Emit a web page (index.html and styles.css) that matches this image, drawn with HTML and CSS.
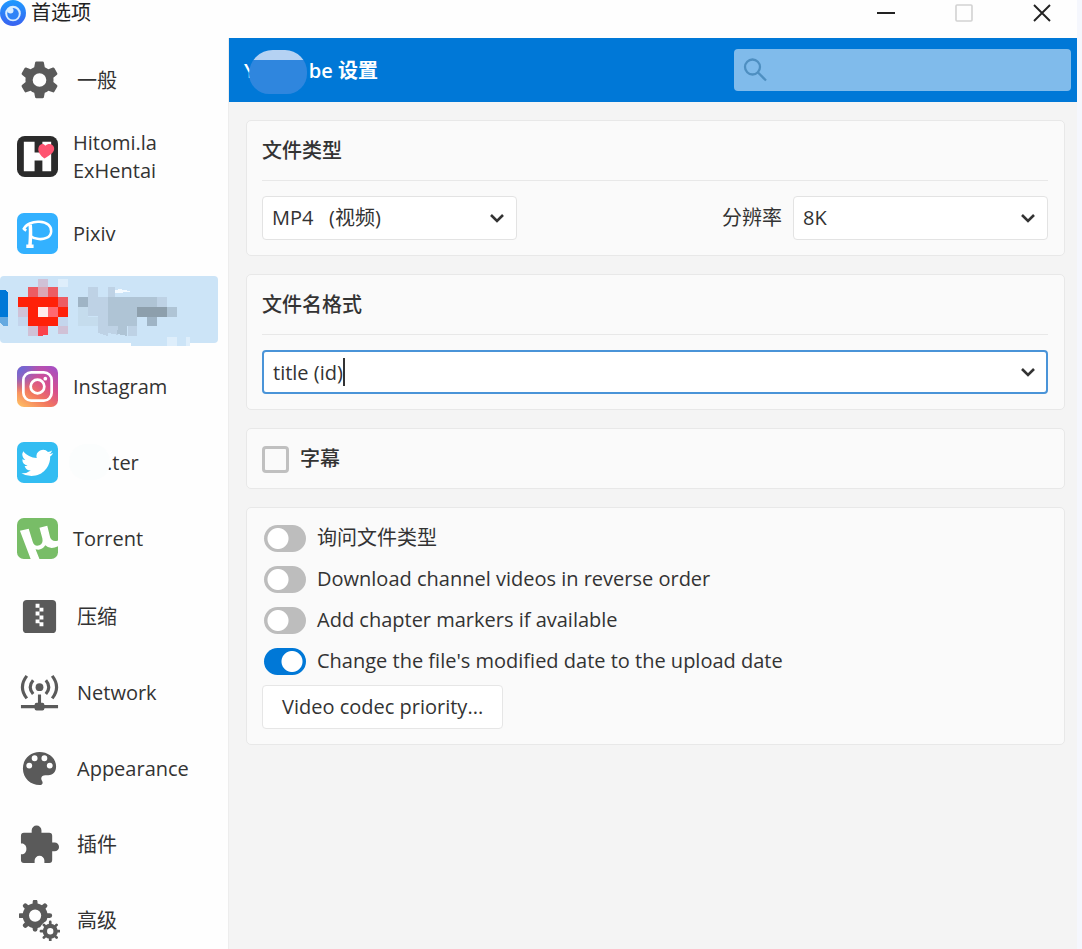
FILE: index.html
```html
<!DOCTYPE html>
<html lang="zh-CN">
<head>
<meta charset="utf-8">
<title>首选项</title>
<link rel="stylesheet" href="styles.css">
</head>
<body>
<div class="window">
  <header class="titlebar">
    <svg class="app-logo" viewBox="0 0 26 26" aria-hidden="true">
      <defs><linearGradient id="logo" x1="0" y1="0" x2="0" y2="1"><stop offset="0" stop-color="#1e9bff"/><stop offset="1" stop-color="#3a62f0"/></linearGradient></defs>
      <circle cx="13" cy="13" r="13" fill="url(#logo)"/>
      <circle cx="13" cy="13.500" r="7.800" fill="#d8edff"/>
      <circle cx="13" cy="13.800" r="5.800" fill="#2f83f7"/>
      <circle cx="10.500" cy="10.500" r="3" fill="#d8edff"/>
    </svg>
    <h1 class="window-title">首选项</h1>
    <div class="window-controls">
      <button class="control" type="button" aria-label="最小化"><svg viewBox="0 0 20 20"><path d="M1 10h18" stroke="#222" stroke-width="2"/></svg></button>
      <button class="control" type="button" aria-label="最大化" disabled><svg viewBox="0 0 20 20"><rect x="2" y="2" width="16" height="16" rx="1" fill="none" stroke="#d2d2d2" stroke-width="1.600"/></svg></button>
      <button class="control" type="button" aria-label="关闭"><svg viewBox="0 0 20 20"><path d="M2 2l16 16M18 2L2 18" stroke="#222" stroke-width="1.900"/></svg></button>
    </div>
  </header>

  <div class="body">
    <nav class="sidebar">
      <button class="item system" type="button">
        <svg class="icon" viewBox="0 0 42 42"><path fill="#5a5a5a" fill-rule="evenodd" d="M16.500 2.500Q16.700 1.500 17.800 1.500h6.400q1.100 0 1.300 1l.9 4.800q2 .8 3.700 2.100l4.600-1.700q1-.3 1.500.6l3 5.200q.5.900-.3 1.600l-3.700 3.200q.3 2.100 0 4.200l3.700 3.200q.8.700.3 1.600l-3 5.200q-.5.900-1.500.6l-4.600-1.700q-1.700 1.300-3.700 2.100l-.9 4.600q-.2 1-1.300 1h-6.400q-1.100 0-1.300-1l-.9-4.600q-2-.8-3.700-2.100l-4.600 1.700q-1 .3-1.500-.6l-3-5.200q-.5-.9.300-1.600l3.700-3.200q-.3-2.100 0-4.200l-3.700-3.200q-.8-.7-.3-1.600l3-5.200q.5-.9 1.500-.6l4.600 1.700q1.700-1.300 3.700-2.100zM21 13.500a7 7 0 1 0 0 14a7 7 0 1 0 0-14z"/></svg>
        <span>一般</span>
      </button>
      <button class="item" type="button">
        <svg class="icon" viewBox="0 0 42 42"><rect width="42" height="42" rx="8" fill="#2b2b2b"/><path fill="#fff" d="M7 6h11v11h8V6h9v30h-9V25h-8v11H7z"/><path fill="#ff5370" d="M28 23c-4-3-7-7-6-11 1-4 5-5 7-2 3-3 8-2 9 2 1 5-5 8-10 11z"/></svg>
        <span>Hitomi.la<br>ExHentai</span>
      </button>
      <button class="item" type="button">
        <svg class="icon" viewBox="0 0 42 42"><rect width="42" height="42" rx="7" fill="#33b1ff"/><g fill="none" stroke="#fff"><path stroke-width="3.600" d="M13.500 12c.8 6 .3 14-.2 21M9.500 34h7.500"/><path stroke-width="2.600" d="M6.500 17C9 11.500 16 8.500 23 9c8 .5 12.500 4.500 12 10C34.500 25.500 27 27.500 21 26.500c-3-.5-5-1-6.500-2.500M6.500 16l3 2"/></g></svg>
        <span>Pixiv</span>
      </button>
      <button class="item selected" type="button" aria-label="已选站点">
        <svg class="mosaic" viewBox="0 0 218 71" shape-rendering="crispEdges">
          <path fill="#cce4f7" d="M131 66h59v4h-59z"/>
          <path fill="#deeefb" d="M167 61h10v9h-10zM186 61h4v9h-4zM58 3h10v8H58z"/>
          <path fill="#0078d7" d="M0 14h5l3 2v25H0z"/><path fill="#65a9e0" d="M0 41h8v9H4l-4-3z"/>
          <path fill="#d0c1d6" d="M38 3h10v8H38zM18 31h10v10H18zM28 50h10v10H28zM58 50h10v8H58z"/>
          <path fill="#ec5c63" d="M28 11h10v10H28zM48 11h10v10H48zM58 21h10v10H58z"/>
          <path fill="#dca5b4" d="M38 11h10v10H38z"/>
          <path fill="#ff2008" d="M18 21h40v10H18zM28 31h10v10H28zM58 31h10v10H58zM28 41h30v9H28z"/>
          <path fill="#ffecee" d="M38 31h10v10H38z"/><path fill="#ff6870" d="M48 31h10v10H48z"/>
          <path fill="#fa434c" d="M38 50h10v9l-10 1z"/>
          <path fill="#c4d5ec" d="M18 41h10v9H18zM58 41h10v9H58z"/>
          <path fill="#bed2e5" d="M88 11h10v29H88zM98 21h10v39l-10-3zM108 11h7v10h-7zM108 50h10v9l-10-2zM128 50h9v10h-9zM157 21h10v10h-10z"/>
          <path fill="#c5dced" d="M78 31h10v19H78zM88 41h10v9H88z"/>
          <path fill="#9fb4c5" d="M78 21h10v10H78zM147 41h10v9h-10z"/>
          <path fill="#afc4d5" d="M108 21h29v29h-29zM137 21h20v10h-20zM167 31h10v10h-10zM118 50h9v10l-10-2z"/>
          <path fill="#8d9fac" d="M137 31h30v10h-30z"/>
          <path fill="#f4faff" d="M115 14q8-2 16 2l-16 1z"/>
        </svg>
      </button>
      <button class="item" type="button">
        <svg class="icon" viewBox="0 0 42 42">
          <defs><linearGradient id="ig" x1=".1" y1="1" x2=".8" y2="0"><stop offset="0" stop-color="#ffbd63"/><stop offset=".35" stop-color="#f2775f"/><stop offset=".65" stop-color="#d84f8d"/><stop offset="1" stop-color="#a94fc0"/></linearGradient>
          <radialGradient id="igb" cx="0" cy="0" r=".65"><stop offset="0" stop-color="#5b6ee0"/><stop offset=".5" stop-color="#7d64d0" stop-opacity=".8"/><stop offset="1" stop-color="#a855b8" stop-opacity="0"/></radialGradient></defs>
          <rect width="42" height="42" rx="7" fill="url(#ig)"/><rect width="42" height="42" rx="7" fill="url(#igb)"/>
          <g fill="none" stroke="#fff" stroke-width="2.800"><rect x="6.500" y="6.500" width="29" height="29" rx="8"/><circle cx="21" cy="21" r="7"/></g><circle cx="29" cy="13" r="1.900" fill="#fff"/>
        </svg>
        <span>Instagram</span>
      </button>
      <button class="item" type="button">
        <svg class="icon" viewBox="0 0 42 42"><rect width="42" height="42" rx="7" fill="#33bdf2"/><path fill="#fff" transform="translate(4.500 4.500) scale(1.370)" d="M23.600 4.900a9.900 9.900 0 0 1-2.800.8 4.900 4.900 0 0 0 2.200-2.700c-1 .6-2 1-3.100 1.200a4.900 4.900 0 0 0-8.400 4.500C7.400 8.500 3.800 6.500 1.400 3.600a4.900 4.900 0 0 0 1.500 6.600c-.8 0-1.600-.2-2.200-.6v.1a4.900 4.900 0 0 0 3.900 4.800 5 5 0 0 1-2.200.1 4.900 4.900 0 0 0 4.600 3.400A9.900 9.900 0 0 1 0 20a14 14 0 0 0 7.500 2.200c9.100 0 14-7.500 14-14v-.6c1-.7 1.800-1.600 2.100-2.700z"/></svg>
        <span class="masked">.ter</span>
      </button>
      <button class="item" type="button">
        <svg class="icon" viewBox="0 0 42 42"><defs><clipPath id="tc"><rect width="42" height="42" rx="7"/></clipPath></defs><rect width="42" height="42" rx="7" fill="#78bd67"/><path clip-path="url(#tc)" fill="#fff" d="M3 13l9-2L16 24q2 6 7 4 4-2 3-7L23 10l8-2L34 20q2 5 8 3v6q-8 4-13-1-4 6-10 4l4 10h-9z"/></svg>
        <span>Torrent</span>
      </button>
      <button class="item system group-start" type="button">
        <svg class="icon" viewBox="0 0 42 42"><rect x="4" y="4" width="34" height="34" rx="4" fill="#5a5a5a"/><path fill="#fff" d="M17 8h4v4h-4zM21 12h4v4h-4zM17 16h4v4h-4zM21 20h4v4h-4zM17 24h4v4h-4zM21 27h4v4h-4z"/></svg>
        <span>压缩</span>
      </button>
      <button class="item system" type="button">
        <svg class="icon" viewBox="0 0 42 42"><g fill="none" stroke="#5a5a5a" stroke-width="3.200"><path d="M8 4q-9 11.500 0 23M34 4q9 11.500 0 23M14.500 8.500q-6 7 0 14M27.500 8.500q6 7 0 14M21 23v10M2 35.500h38"/></g><circle cx="21" cy="15.500" r="4" fill="#5a5a5a"/><rect x="16" y="31.500" width="10" height="8" rx="2" fill="#5a5a5a"/></svg>
        <span>Network</span>
      </button>
      <button class="item system" type="button">
        <svg class="icon" viewBox="0 0 42 42"><path fill="#5a5a5a" fill-rule="evenodd" d="M21 4C11 4 4 11.500 4 21c0 10 8 17 17 17 3 0 4-2 2.500-4.500C21.500 30 24 28 27 28h3c5 0 8-4 8-9C38 10 30 4 21 4zM10.500 15a3 3 0 1 0 0 6 3 3 0 1 0 0-6zM16 7.500a3 3 0 1 0 0 6 3 3 0 1 0 0-6zM26 7.500a3 3 0 1 0 0 6 3 3 0 1 0 0-6zM31.500 15a3 3 0 1 0 0 6 3 3 0 1 0 0-6z"/></svg>
        <span>Appearance</span>
      </button>
      <button class="item system" type="button">
        <svg class="icon" viewBox="0 0 42 42"><path fill="#5a5a5a" d="M5 9h8V6.500a5 5 0 0 1 10 0V9h8q3 0 3 3v7h2.500a4.500 4.500 0 0 1 0 9H34v9q0 3-3 3h-5v-2.500a5 5 0 0 0-10 0V40H5q-3 0-3-3v-6h2a6 6 0 0 0 0-11H2v-8q0-3 3-3z"/></svg>
        <span>插件</span>
      </button>
      <button class="item system" type="button">
        <svg class="icon" viewBox="0 0 42 42"><g fill="none" stroke="#5a5a5a"><circle cx="16.500" cy="16" r="9.500" stroke-width="6.500"/><path stroke-width="5" stroke-linecap="round" d="M16.500 3.500V2M16.500 28.500V30M4 16H1.500M29 16h2.500M7.500 7L6.500 6M25.500 7l1-1M7.500 25l-1 1"/></g><circle cx="32" cy="32" r="11" fill="#fefefe"/><g fill="none" stroke="#5a5a5a"><circle cx="32" cy="32" r="5.500" stroke-width="4.500"/><path stroke-width="2.800" stroke-linecap="round" d="M32 25v-2.500M32 39v2.500M25 32h-2.500M39 32h2.500M27 27l-1.500-1.500M37 27l1.500-1.500M27 37l-1.500 1.500M37 37l1.500 1.500"/></g></svg>
        <span>高级</span>
      </button>
    </nav>

    <main class="content">
      <div class="page-header">
        <h2 class="page-title"><span>Y</span><span class="smudge"></span><span>be 设置</span></h2>
        <label class="search">
          <svg viewBox="0 0 24 24" aria-hidden="true"><g fill="none" stroke="#4e8fc1" stroke-width="2.300"><circle cx="9.500" cy="9" r="7.500"/><path d="M15 14.500l8 8"/></g></svg>
          <input type="search" aria-label="搜索">
        </label>
      </div>

      <div class="panels">
        <section class="panel">
          <h3 class="panel-title">文件类型</h3>
          <div class="row">
            <span class="combo">
              <select class="field" aria-label="文件类型"><option>MP4 &nbsp;&nbsp;(视频)</option></select>
              <svg class="chevron" viewBox="0 0 16 10"><path d="M2 2l6 6 6-6"/></svg>
            </span>
            <div class="pair">
              <label for="resolution">分辨率</label>
              <span class="combo">
                <select class="field" id="resolution"><option>8K</option></select>
                <svg class="chevron" viewBox="0 0 16 10"><path d="M2 2l6 6 6-6"/></svg>
              </span>
            </div>
          </div>
        </section>

        <section class="panel">
          <h3 class="panel-title">文件名格式</h3>
          <div class="row">
            <span class="combo wide">
              <input class="field active" type="text" value="title (id)" aria-label="文件名格式">
              <span class="caret"></span>
              <svg class="chevron" viewBox="0 0 16 10"><path d="M2 2l6 6 6-6"/></svg>
            </span>
          </div>
        </section>

        <section class="panel compact">
          <label class="check"><input type="checkbox"><span>字幕</span></label>
        </section>

        <section class="panel options">
          <label class="toggle"><input type="checkbox"><span>询问文件类型</span></label>
          <label class="toggle"><input type="checkbox"><span>Download channel videos in reverse order</span></label>
          <label class="toggle"><input type="checkbox"><span>Add chapter markers if available</span></label>
          <label class="toggle"><input type="checkbox" checked><span>Change the file's modified date to the upload date</span></label>
          <button class="push" type="button">Video codec priority...</button>
        </section>
      </div>
    </main>
  </div>
</div>
</body>
</html>
```
FILE: styles.css
```css
* { box-sizing: border-box; }

body {
  margin: 0;
  background: #f5f7fd;
  color: #333;
  font: 20px/28px "Open Sans", "Noto Sans CJK SC", sans-serif;
}

button, input, select { font: inherit; color: inherit; }

.window {
  display: flex;
  flex-direction: column;
  height: 100vh;
  margin-right: 5px;
  overflow: hidden;
  background: #fefefe;
}

.titlebar {
  display: flex;
  flex: none;
  align-items: center;
  height: 38px;
  padding-bottom: 12px;
}

.app-logo { width: 26px; height: 26px; }

.window-title {
  margin: 0 auto 0 5px;
  font-size: 20px;
  font-weight: 400;
  color: #222;
}

.window-controls { display: flex; gap: 30px; margin-right: 11px; }

.control {
  display: flex;
  align-items: center;
  justify-content: center;
  width: 48px;
  height: 26px;
  padding: 0;
  border: 0;
  background: none;
}

.control svg { width: 20px; height: 20px; }

.body { display: flex; flex: 1; min-height: 0; }

.sidebar {
  display: flex;
  flex: none;
  flex-direction: column;
  gap: 8px;
  width: 228px;
  padding: 8px 10px 0 0;
  overflow: hidden;
}

.item {
  position: relative;
  display: flex;
  flex: none;
  align-items: center;
  gap: 15px;
  width: 100%;
  min-height: 68px;
  padding: 6px 0 6px 17px;
  border: 0;
  border-radius: 4px;
  background: none;
  text-align: left;
}

.icon { flex: none; width: 41px; height: 41px; }
.system { gap: 17px; padding-left: 19px; }
.group-start { margin-top: 2px; }
.selected { margin: 1px 0; min-height: 67px; background: #cce4f7; }

.mosaic {
  position: absolute;
  top: 0;
  left: 0;
  width: 218px;
  height: 71px;
}

.item > span { padding-top: 1px; }

.item > .masked { position: relative; padding-left: 34px; }

.masked::before {
  content: "";
  position: absolute;
  top: -4px;
  left: -4px;
  width: 41px;
  height: 36px;
  border-radius: 18px;
  background: #fbfdfd;
}

.content {
  flex: 1;
  min-width: 0;
  border-left: 1px solid #ededed;
  background: #f4f4f4;
}

.page-header {
  display: flex;
  align-items: center;
  justify-content: space-between;
  height: 64px;
  padding: 0 6px 0 15px;
  background: #0078d7;
  color: #fff;
}

.page-title {
  display: flex;
  align-items: center;
  margin: 0;
  padding-top: 2px;
  font-size: 20px;
  font-weight: 600;
}

.smudge {
  z-index: 1;
  width: 58px;
  height: 44px;
  margin: 2px 2px 0 -7px;
  border-radius: 26px 24px 22px 22px;
  background: linear-gradient(#b5d2f3 10px, #2f86de 10px);
}

.search {
  display: flex;
  align-items: center;
  gap: 8px;
  width: 337px;
  height: 42px;
  padding: 0 9px;
  border-radius: 4px;
  background: #80bbeb;
}

.search svg { flex: none; width: 24px; height: 24px; }

.search input {
  flex: 1;
  min-width: 0;
  border: 0;
  outline: 0;
  background: none;
}

.panels {
  display: flex;
  flex-direction: column;
  gap: 18px;
  padding: 18px 12px 18px 17px;
}

.panel {
  padding: 16px 16px 15px 15px;
  border: 1px solid #e8e8e8;
  border-radius: 5px;
  background: #fafafa;
}

.panel-title {
  margin: 0;
  padding-bottom: 15px;
  border-bottom: 1px solid #e8e8e8;
  font-size: 20px;
  font-weight: 500;
}

.row {
  display: flex;
  align-items: center;
  justify-content: space-between;
  padding-top: 15px;
}

.pair { display: flex; align-items: center; gap: 11px; }

.combo { position: relative; width: 255px; }
.wide { width: 100%; }

.field {
  display: block;
  width: 100%;
  height: 44px;
  padding: 0 40px 0 9px;
  border: 1px solid #e3e3e3;
  border-radius: 4px;
  outline: 0;
  background: #fff;
  appearance: none;
}

.active { border: 2px solid #4a94d8; padding-left: 9px; }

.chevron {
  position: absolute;
  top: 17px;
  right: 12px;
  width: 16px;
  height: 10px;
  fill: none;
  stroke: #333;
  stroke-width: 2.6;
  pointer-events: none;
}

.caret {
  position: absolute;
  top: 8px;
  left: 81px;
  width: 2px;
  height: 28px;
  background: #333;
}

.check { display: flex; align-items: center; gap: 11px; font-weight: 500; }

.check input {
  width: 27px;
  height: 27px;
  margin: 0;
  border: 3px solid #c0c0c0;
  border-radius: 4px;
  appearance: none;
}

.options {
  display: flex;
  flex-direction: column;
  align-items: flex-start;
  gap: 13px;
}

.toggle { display: flex; align-items: center; gap: 11px; padding-left: 2px; }

.toggle input {
  width: 42px;
  height: 27px;
  margin: 0;
  border-radius: 14px;
  background: radial-gradient(circle at 14px, #fff 10px, #bdbdbd 11px);
  appearance: none;
}

.toggle input:checked {
  background: radial-gradient(circle at 28px, #fff 10px, #0078d7 11px);
}

.push {
  height: 44px;
  margin-top: -3px;
  padding: 0 19px;
  border: 1px solid #e6e6e6;
  border-radius: 4px;
  background: #fff;
}
```
